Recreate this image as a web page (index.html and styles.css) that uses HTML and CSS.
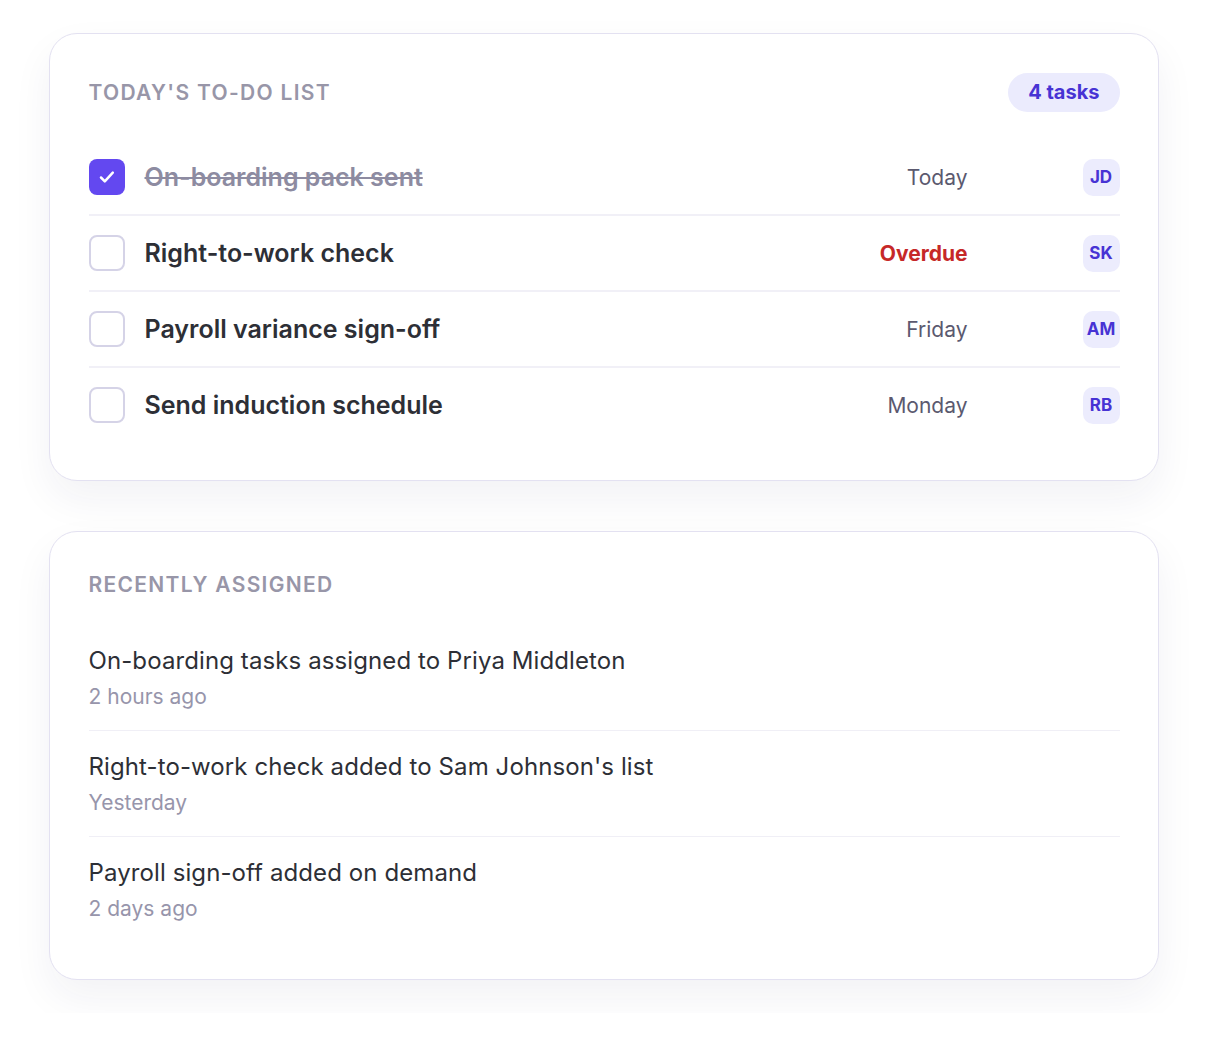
FILE: index.html
```html
<!DOCTYPE html>
<html lang="en">
<head>
    <meta charset="UTF-8">
    <meta name="viewport" content="width=device-width, initial-scale=1.0">
    <title>To-do</title>
    <link rel="stylesheet" href="styles.css">
</head>
<body>
    <div class="page">
        <div class="card">
            <div class="card-header">
                <h2 class="card-title">Today's to-do list</h2>
                <span class="count-badge">4 tasks</span>
            </div>
            <div class="task-list">
                <div class="task done">
                    <span class="check checked">
                        <svg width="20" height="20" viewBox="0 0 20 20"><path d="M4 10.5l3.8 3.8 8-8.6" fill="none" stroke="#fff" stroke-width="2.5" stroke-linecap="round" stroke-linejoin="round"/></svg>
                    </span>
                    <span class="task-name">On-boarding pack sent</span>
                    <span class="due">Today</span>
                    <span class="avatar">JD</span>
                </div>
                <div class="task">
                    <span class="check"></span>
                    <span class="task-name">Right-to-work check</span>
                    <span class="due overdue">Overdue</span>
                    <span class="avatar">SK</span>
                </div>
                <div class="task">
                    <span class="check"></span>
                    <span class="task-name">Payroll variance sign-off</span>
                    <span class="due">Friday</span>
                    <span class="avatar">AM</span>
                </div>
                <div class="task">
                    <span class="check"></span>
                    <span class="task-name">Send induction schedule</span>
                    <span class="due">Monday</span>
                    <span class="avatar">RB</span>
                </div>
            </div>
        </div>

        <div class="card">
            <div class="card-header">
                <h2 class="card-title">Recently assigned</h2>
            </div>
            <div class="activity-list">
                <div class="activity">
                    <div class="activity-text">On-boarding tasks assigned to Priya Middleton</div>
                    <div class="activity-time">2 hours ago</div>
                </div>
                <div class="activity">
                    <div class="activity-text">Right-to-work check added to Sam Johnson's list</div>
                    <div class="activity-time">Yesterday</div>
                </div>
                <div class="activity">
                    <div class="activity-text">Payroll sign-off added on demand</div>
                    <div class="activity-time">2 days ago</div>
                </div>
            </div>
        </div>
    </div>
</body>
</html>
```

FILE: styles.css
```css
body {
    margin: 0;
    padding: 0;
    background: #fff;
    font-family: 'Inter', 'Liberation Sans', sans-serif;
    color: #2d2f36;
}

.page {
    display: flex;
    flex-direction: column;
    gap: 50px;
    padding: 33px 49px;
}

.card {
    background: #fff;
    border: 1.5px solid #e3e1f1;
    border-radius: 28px;
    padding: 39px 38.5px 38px;
    box-shadow: 0 18px 40px rgba(40, 30, 90, 0.06);
}

.card-header {
    display: flex;
    justify-content: space-between;
    align-items: center;
    margin-bottom: 26px;
}

.card-header:has(+ .task-list) {
    margin-bottom: 28px;
}

.card-title {
    margin: 0;
    font-size: 21px;
    line-height: 28px;
    font-weight: 600;
    text-transform: uppercase;
    letter-spacing: 1.3px;
    color: #9896a8;
}

.count-badge {
    display: inline-block;
    padding: 0 20px;
    height: 39px;
    line-height: 39px;
    border-radius: 20px;
    background: #ebebfd;
    color: #4733d4;
    font-size: 20px;
    font-weight: 700;
}

.task {
    display: flex;
    align-items: center;
    height: 74px;
    border-bottom: 2px solid #f1f0f7;
}

.task:last-child {
    border-bottom: none;
}

.check {
    width: 32px;
    height: 32px;
    border: 2px solid #d5d3e7;
    border-radius: 8px;
    display: flex;
    align-items: center;
    justify-content: center;
    flex-shrink: 0;
}

.check.checked {
    width: 36px;
    height: 36px;
    border: none;
    background: #6348f0;
}

.task-name {
    flex: 1;
    margin-left: 20px;
    font-size: 25px;
    font-weight: 600;
    color: #2d2f36;
}

.task.done .task-name {
    color: #8d8ba1;
    text-decoration: line-through;
    text-decoration-thickness: 2px;
}

.due {
    font-size: 21px;
    color: #5b596f;
    text-align: right;
}

.due.overdue {
    color: #c62828;
    font-weight: 700;
}

.avatar {
    width: 37px;
    height: 37px;
    margin-left: 115px;
    border-radius: 10px;
    background: #ececfd;
    color: #4733d4;
    font-size: 17px;
    font-weight: 700;
    display: flex;
    align-items: center;
    justify-content: center;
    flex-shrink: 0;
}

.activity {
    padding: 20px 0 19px;
    border-bottom: 1.5px solid #f0eff6;
}

.activity:last-child {
    border-bottom: none;
    padding-bottom: 18px;
}

.activity-text {
    font-size: 24px;
    line-height: 32px;
    letter-spacing: 0.1px;
    color: #2d2f36;
}

.activity-time {
    margin-top: 6px;
    font-size: 21px;
    line-height: 28px;
    color: #9795ab;
}
```
